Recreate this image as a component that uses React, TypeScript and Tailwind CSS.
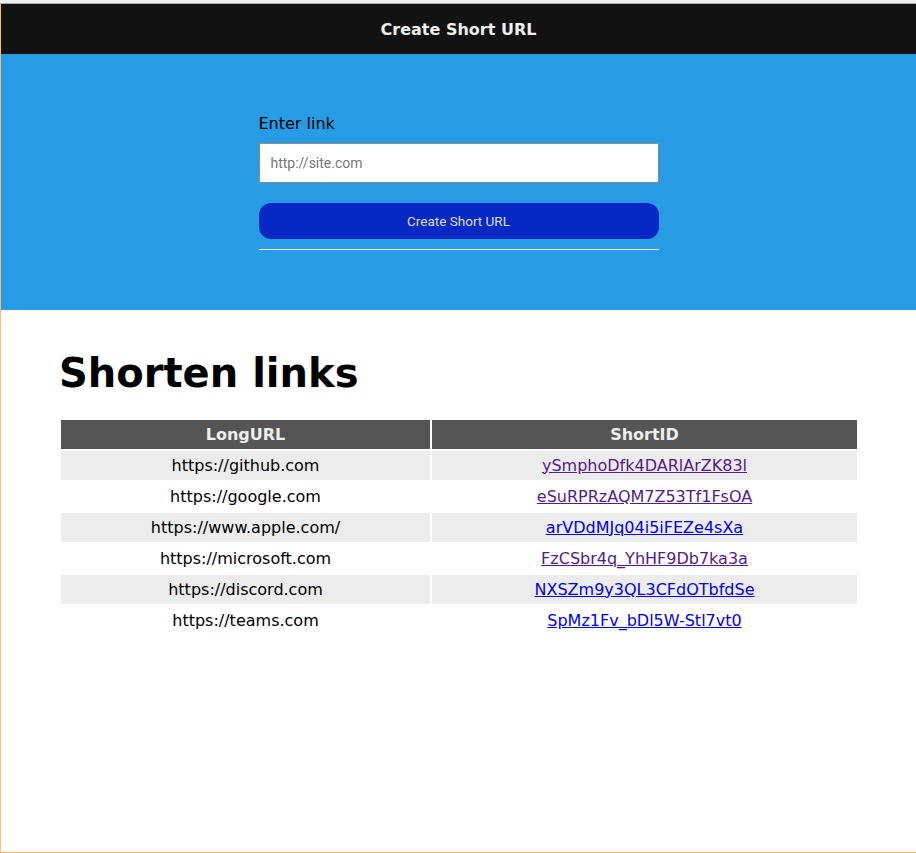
import { useState } from 'react';

const links = [
  { longUrl: 'https://github.com', shortId: 'ySmphoDfk4DARlArZK83l', visited: true },
  { longUrl: 'https://google.com', shortId: 'eSuRPRzAQM7Z53Tf1FsOA', visited: true },
  { longUrl: 'https://www.apple.com/', shortId: 'arVDdMJq04i5iFEZe4sXa', visited: false },
  { longUrl: 'https://microsoft.com', shortId: 'FzCSbr4q_YhHF9Db7ka3a', visited: true },
  { longUrl: 'https://discord.com', shortId: 'NXSZm9y3QL3CFdOTbfdSe', visited: false },
  { longUrl: 'https://teams.com', shortId: 'SpMz1Fv_bDl5W-Stl7vt0', visited: false },
];

export default function App() {
  const [url, setUrl] = useState('');

  return (
    <div className="font-['DejaVu_Sans',sans-serif] bg-white">
      <div className="h-[3px] bg-[#f0f0f0] border-b border-[#aaaaaa] box-content" />
      <div className="h-[849px] border-l border-b border-[#ffb86c] flex flex-col">
        {/* Navbar */}
        <div className="h-[50px] bg-[#121212] flex items-center justify-center pt-[2px]">
          <span className="text-[16px] font-bold text-[#eeeeee]">Create Short URL</span>
        </div>

        {/* Form */}
        <div className="h-[256px] bg-[#279be3] pt-[60px]">
          <form
            className="w-[400px] mx-auto"
            onSubmit={(e) => {
              e.preventDefault();
            }}
          >
            <label className="block text-[16px] leading-[19px] text-black">Enter link</label>
            <input
              type="text"
              value={url}
              onChange={(e) => setUrl(e.target.value)}
              placeholder="http://site.com"
              className="mt-[10px] block w-full h-[40px] bg-white border border-[#8a8a8a] px-[11px] text-[14px] font-['Roboto',sans-serif] placeholder:text-[#777777] outline-none"
            />
            <button
              type="submit"
              className="mt-[20px] block w-full h-[36px] rounded-[12px] bg-[#0828c4] text-[#dddddd] text-[13.5px] font-['Roboto',sans-serif]"
            >
              Create Short URL
            </button>
            <hr className="mt-[10px] border-0 border-t border-white" />
          </form>
        </div>

        {/* Links */}
        <div className="pt-[40px] pl-[58px]">
          <h1 className="text-[40px] font-bold leading-[47px] text-black">Shorten links</h1>
          <table className="mt-[21px] w-[800px] table-fixed border-separate border-spacing-[2px] text-[16px]">
            <colgroup>
              <col className="w-[369px]" />
              <col />
            </colgroup>
            <thead>
              <tr className="bg-[#555555] text-[#eeeeee]">
                <th className="h-[29px] p-0 font-bold">LongURL</th>
                <th className="h-[29px] p-0 font-bold">ShortID</th>
              </tr>
            </thead>
            <tbody>
              {links.map((link, i) => (
                <tr key={link.shortId} className={i % 2 === 0 ? 'bg-[#ececec]' : 'bg-white'}>
                  <td className="h-[29px] p-0 text-center text-black">{link.longUrl}</td>
                  <td className="h-[29px] p-0 text-center">
                    <a
                      href="#"
                      className={
                        'underline ' + (link.visited ? 'text-[#551a8b]' : 'text-[#0000ee]')
                      }
                    >
                      {link.shortId}
                    </a>
                  </td>
                </tr>
              ))}
            </tbody>
          </table>
        </div>
      </div>
    </div>
  );
}
